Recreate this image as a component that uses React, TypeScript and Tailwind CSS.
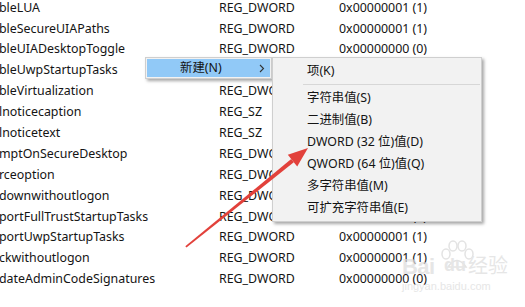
import React from "react";

const rows: [string, string, string][] = [
  ["bleLUA", "REG_DWORD", "0x00000001 (1)"],
  ["bleSecureUIAPaths", "REG_DWORD", "0x00000001 (1)"],
  ["bleUIADesktopToggle", "REG_DWORD", "0x00000000 (0)"],
  ["bleUwpStartupTasks", "REG_DWORD", "0x00000002 (2)"],
  ["bleVirtualization", "REG_DWORD", "0x00000001 (1)"],
  ["lnoticecaption", "REG_SZ", ""],
  ["lnoticetext", "REG_SZ", ""],
  ["mptOnSecureDesktop", "REG_DWORD", "0x00000001 (1)"],
  ["rceoption", "REG_DWORD", "0x00000000 (0)"],
  ["downwithoutlogon", "REG_DWORD", "0x00000001 (1)"],
  ["portFullTrustStartupTasks", "REG_DWORD", "0x00000001 (1)"],
  ["portUwpStartupTasks", "REG_DWORD", "0x00000001 (1)"],
  ["ckwithoutlogon", "REG_DWORD", "0x00000001 (1)"],
  ["dateAdminCodeSignatures", "REG_DWORD", "0x00000000 (0)"],
];

const subItems = [
  "字符串值(S)",
  "二进制值(B)",
  "DWORD (32 位)值(D)",
  "QWORD (64 位)值(Q)",
  "多字符串值(M)",
  "可扩充字符串值(E)",
];

export default function App() {
  return (
    <div
      className="relative w-[525px] h-[307px] overflow-hidden bg-white text-[#141414] text-[12.4px]"
      style={{ fontFamily: '"Noto Sans", "Noto Sans CJK SC", sans-serif' }}
    >
      <div className="flex flex-col -mt-[2.5px]">
        {rows.map((r, i) => (
          <div key={i} className="flex h-[20.9px] items-center whitespace-nowrap">
            <div className="w-[219px] -ml-[1px] pl-0">{r[0]}</div>
            <div className="w-[121px] pl-[1px]">{r[1]}</div>
            <div>{r[2]}</div>
          </div>
        ))}
      </div>

      {/* Watermark */}
      <div className="absolute left-[402px] top-[240px] w-[110px] h-[60px] text-[#dcdcdc] opacity-70 pointer-events-none">
        <svg className="absolute left-[34px] top-[0px]" width="40" height="30" viewBox="0 0 40 30">
          <g fill="none" stroke="#d8d8d8" strokeWidth="1.5">
            <ellipse cx="10" cy="14" rx="4" ry="5" />
            <ellipse cx="17" cy="6" rx="4" ry="5" />
            <ellipse cx="26" cy="6" rx="4" ry="5" />
            <ellipse cx="33" cy="14" rx="4" ry="5" />
            <path d="M12 27 Q21 14 30 27 Z" />
          </g>
        </svg>
        <div className="absolute left-[0px] top-[10px] text-[22px] font-bold tracking-tight" style={{ fontFamily: '"Liberation Sans", sans-serif' }}>
          Bai
        </div>
        <div className="absolute left-[42px] top-[12px] text-[18px] font-bold" style={{ fontFamily: '"Liberation Sans", sans-serif' }}>
          du
        </div>
        <div className="absolute left-[66px] top-[10px] text-[20px]" style={{ fontFamily: '"Noto Sans CJK SC", sans-serif' }}>
          经验
        </div>
        <div className="absolute left-[0px] top-[38px] text-[11px]" style={{ fontFamily: '"Liberation Sans", sans-serif' }}>
          jingyan.baidu.com
        </div>
      </div>

      {/* First context menu */}
      <div className="absolute left-[145px] top-[57px] w-[127px] h-[22px] bg-[#f2f2f2] border border-[#cfcfcf] p-[1px] shadow-[2px_2px_3px_rgba(0,0,0,0.35)]">
        <div className="flex items-center h-full bg-[#91c9f7] pl-[33px] pr-[5px]">
          <span className="flex-1">新建(N)</span>
          <svg width="6" height="9" viewBox="0 0 6 9">
            <path d="M1 1 L4.5 4.5 L1 8" fill="none" stroke="#333" strokeWidth="1.1" />
          </svg>
        </div>
      </div>

      {/* Submenu */}
      <div className="absolute left-[272px] top-[57px] w-[210px] h-[165px] bg-[#f2f2f2] border border-[#cfcfcf] pt-[2px] shadow-[2px_2px_3px_rgba(0,0,0,0.35)]">
        <div className="flex items-center h-[22px] pl-[34px]">项(K)</div>
        <div className="h-[5px] flex items-center pl-[30px] pr-[1px]">
          <div className="h-px w-full bg-[#d7d7d7]" />
        </div>
        {subItems.map((s) => (
          <div key={s} className="flex items-center h-[22px] pl-[34px] whitespace-nowrap">
            {s}
          </div>
        ))}
      </div>

      {/* Red arrow */}
      <svg className="absolute left-0 top-0 pointer-events-none" width="525" height="307" viewBox="0 0 525 307">
        <polygon
          points="186.5,247.6 185.3,246.2 291.2,159.0 293.8,162.2"
          fill="#e2413b"
        />
        <polygon points="308,148 287.8,154.8 297.2,166.4" fill="#e2413b" />
      </svg>
    </div>
  );
}
